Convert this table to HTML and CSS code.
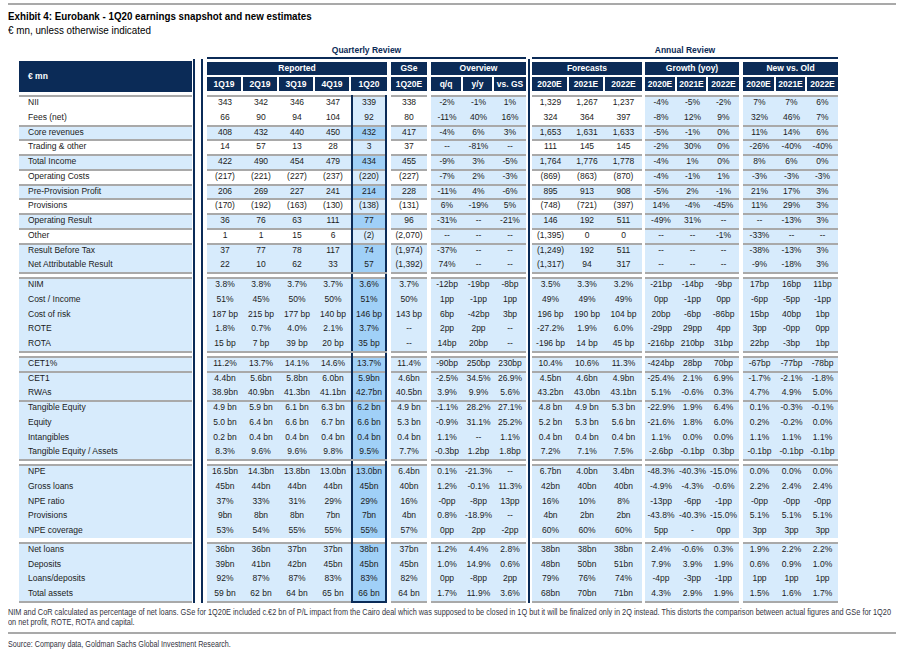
FILE: index.html
```html
<!DOCTYPE html>
<html lang="en">
<head>
<meta charset="utf-8">
<title>Exhibit 4: Eurobank - 1Q20 earnings snapshot and new estimates</title>
<link rel="stylesheet" href="styles.css">
</head>
<body>
<div class="page">
  <div class="rule"></div>
  <div class="title">Exhibit 4: Eurobank - 1Q20 earnings snapshot and new estimates</div>
  <div class="sub">€ mn, unless otherwise indicated</div>

  <div class="review">
    <div class="qr">Quarterly Review</div>
    <div class="ar">Annual Review</div>
  </div>

  <div class="tbl">
    <div class="hdr">
      <div class="hlab">€ mn</div>
      <div class="hg rep"><div class="gt">Reported</div><div class="gc"><span>1Q19</span><span>2Q19</span><span>3Q19</span><span>4Q19</span><span>1Q20</span></div></div>
      <div class="hg gse"><div class="gt">GSe</div><div class="gc"><span>1Q20E</span></div></div>
      <div class="hg ov"><div class="gt">Overview</div><div class="gc"><span>q/q</span><span>y/y</span><span>vs. GS</span></div></div>
      <div class="hg fc"><div class="gt">Forecasts</div><div class="gc"><span>2020E</span><span>2021E</span><span>2022E</span></div></div>
      <div class="hg gr"><div class="gt">Growth (yoy)</div><div class="gc"><span>2020E</span><span>2021E</span><span>2022E</span></div></div>
      <div class="hg nv"><div class="gt">New vs. Old</div><div class="gc"><span>2020E</span><span>2021E</span><span>2022E</span></div></div>
    </div>

    <div class="body">
      <div class="r t"><div class="lab">NII</div><div class="rep"><span>343</span><span>342</span><span>346</span><span>347</span><span>339</span></div><div class="gse"><span>338</span></div><div class="ov"><span>-2%</span><span>-1%</span><span>1%</span></div><div class="fc"><span>1,329</span><span>1,267</span><span>1,237</span></div><div class="gr"><span>-4%</span><span>-5%</span><span>-2%</span></div><div class="nv"><span>7%</span><span>7%</span><span>6%</span></div></div>
      <div class="r"><div class="lab">Fees (net)</div><div class="rep"><span>66</span><span>90</span><span>94</span><span>104</span><span>92</span></div><div class="gse"><span>80</span></div><div class="ov"><span>-11%</span><span>40%</span><span>16%</span></div><div class="fc"><span>324</span><span>364</span><span>397</span></div><div class="gr"><span>-8%</span><span>12%</span><span>9%</span></div><div class="nv"><span>32%</span><span>46%</span><span>7%</span></div></div>
      <div class="r t b"><div class="lab">Core revenues</div><div class="rep"><span>408</span><span>432</span><span>440</span><span>450</span><span>432</span></div><div class="gse"><span>417</span></div><div class="ov"><span>-4%</span><span>6%</span><span>3%</span></div><div class="fc"><span>1,653</span><span>1,631</span><span>1,633</span></div><div class="gr"><span>-5%</span><span>-1%</span><span>0%</span></div><div class="nv"><span>11%</span><span>14%</span><span>6%</span></div></div>
      <div class="r t"><div class="lab">Trading &amp; other</div><div class="rep"><span>14</span><span>57</span><span>13</span><span>28</span><span>3</span></div><div class="gse"><span>37</span></div><div class="ov"><span>--</span><span>-81%</span><span>--</span></div><div class="fc"><span>111</span><span>145</span><span>145</span></div><div class="gr"><span>-2%</span><span>30%</span><span>0%</span></div><div class="nv"><span>-26%</span><span>-40%</span><span>-40%</span></div></div>
      <div class="r t b"><div class="lab">Total Income</div><div class="rep"><span>422</span><span>490</span><span>454</span><span>479</span><span>434</span></div><div class="gse"><span>455</span></div><div class="ov"><span>-9%</span><span>3%</span><span>-5%</span></div><div class="fc"><span>1,764</span><span>1,776</span><span>1,778</span></div><div class="gr"><span>-4%</span><span>1%</span><span>0%</span></div><div class="nv"><span>8%</span><span>6%</span><span>0%</span></div></div>
      <div class="r t"><div class="lab">Operating Costs</div><div class="rep"><span>(217)</span><span>(221)</span><span>(227)</span><span>(237)</span><span>(220)</span></div><div class="gse"><span>(227)</span></div><div class="ov"><span>-7%</span><span>2%</span><span>-3%</span></div><div class="fc"><span>(869)</span><span>(863)</span><span>(870)</span></div><div class="gr"><span>-4%</span><span>-1%</span><span>1%</span></div><div class="nv"><span>-3%</span><span>-3%</span><span>-3%</span></div></div>
      <div class="r t b"><div class="lab">Pre-Provision Profit</div><div class="rep"><span>206</span><span>269</span><span>227</span><span>241</span><span>214</span></div><div class="gse"><span>228</span></div><div class="ov"><span>-11%</span><span>4%</span><span>-6%</span></div><div class="fc"><span>895</span><span>913</span><span>908</span></div><div class="gr"><span>-5%</span><span>2%</span><span>-1%</span></div><div class="nv"><span>21%</span><span>17%</span><span>3%</span></div></div>
      <div class="r t"><div class="lab">Provisions</div><div class="rep"><span>(170)</span><span>(192)</span><span>(163)</span><span>(130)</span><span>(138)</span></div><div class="gse"><span>(131)</span></div><div class="ov"><span>6%</span><span>-19%</span><span>5%</span></div><div class="fc"><span>(748)</span><span>(721)</span><span>(397)</span></div><div class="gr"><span>14%</span><span>-4%</span><span>-45%</span></div><div class="nv"><span>11%</span><span>29%</span><span>3%</span></div></div>
      <div class="r t b"><div class="lab">Operating Result</div><div class="rep"><span>36</span><span>76</span><span>63</span><span>111</span><span>77</span></div><div class="gse"><span>96</span></div><div class="ov"><span>-31%</span><span>--</span><span>-21%</span></div><div class="fc"><span>146</span><span>192</span><span>511</span></div><div class="gr"><span>-49%</span><span>31%</span><span>--</span></div><div class="nv"><span>--</span><span>-13%</span><span>3%</span></div></div>
      <div class="r t"><div class="lab">Other</div><div class="rep"><span>1</span><span>1</span><span>15</span><span>6</span><span>(2)</span></div><div class="gse"><span>(2,070)</span></div><div class="ov"><span>--</span><span>--</span><span>--</span></div><div class="fc"><span>(1,395)</span><span>0</span><span>0</span></div><div class="gr"><span>--</span><span>--</span><span>-1%</span></div><div class="nv"><span>-33%</span><span>--</span><span>--</span></div></div>
      <div class="r t b"><div class="lab">Result Before Tax</div><div class="rep"><span>37</span><span>77</span><span>78</span><span>117</span><span>74</span></div><div class="gse"><span>(1,974)</span></div><div class="ov"><span>-37%</span><span>--</span><span>--</span></div><div class="fc"><span>(1,249)</span><span>192</span><span>511</span></div><div class="gr"><span>--</span><span>--</span><span>--</span></div><div class="nv"><span>-38%</span><span>-13%</span><span>3%</span></div></div>
      <div class="r b"><div class="lab">Net Attributable Result</div><div class="rep"><span>22</span><span>10</span><span>62</span><span>33</span><span>57</span></div><div class="gse"><span>(1,392)</span></div><div class="ov"><span>74%</span><span>--</span><span>--</span></div><div class="fc"><span>(1,317)</span><span>94</span><span>317</span></div><div class="gr"><span>--</span><span>--</span><span>--</span></div><div class="nv"><span>-9%</span><span>-18%</span><span>3%</span></div></div>

      <div class="sep"><div class="lab"></div><div class="rep"></div><div class="gse"></div><div class="ov"></div><div class="fc"></div><div class="gr"></div><div class="nv"></div></div>

      <div class="r t b"><div class="lab">NIM</div><div class="rep"><span>3.8%</span><span>3.8%</span><span>3.7%</span><span>3.7%</span><span>3.6%</span></div><div class="gse"><span>3.7%</span></div><div class="ov"><span>-12bp</span><span>-19bp</span><span>-8bp</span></div><div class="fc"><span>3.5%</span><span>3.3%</span><span>3.2%</span></div><div class="gr"><span>-21bp</span><span>-14bp</span><span>-9bp</span></div><div class="nv"><span>17bp</span><span>16bp</span><span>11bp</span></div></div>
      <div class="r b"><div class="lab">Cost / Income</div><div class="rep"><span>51%</span><span>45%</span><span>50%</span><span>50%</span><span>51%</span></div><div class="gse"><span>50%</span></div><div class="ov"><span>1pp</span><span>-1pp</span><span>1pp</span></div><div class="fc"><span>49%</span><span>49%</span><span>49%</span></div><div class="gr"><span>0pp</span><span>-1pp</span><span>0pp</span></div><div class="nv"><span>-6pp</span><span>-5pp</span><span>-1pp</span></div></div>
      <div class="r b"><div class="lab">Cost of risk</div><div class="rep"><span>187 bp</span><span>215 bp</span><span>177 bp</span><span>140 bp</span><span>146 bp</span></div><div class="gse"><span>143 bp</span></div><div class="ov"><span>6bp</span><span>-42bp</span><span>3bp</span></div><div class="fc"><span>196 bp</span><span>190 bp</span><span>104 bp</span></div><div class="gr"><span>20bp</span><span>-6bp</span><span>-86bp</span></div><div class="nv"><span>15bp</span><span>40bp</span><span>1bp</span></div></div>
      <div class="r b"><div class="lab">ROTE</div><div class="rep"><span>1.8%</span><span>0.7%</span><span>4.0%</span><span>2.1%</span><span>3.7%</span></div><div class="gse"><span>--</span></div><div class="ov"><span>2pp</span><span>2pp</span><span>--</span></div><div class="fc"><span>-27.2%</span><span>1.9%</span><span>6.0%</span></div><div class="gr"><span>-29pp</span><span>29pp</span><span>4pp</span></div><div class="nv"><span>3pp</span><span>-0pp</span><span>0pp</span></div></div>
      <div class="r b"><div class="lab">ROTA</div><div class="rep"><span>15 bp</span><span>7 bp</span><span>39 bp</span><span>20 bp</span><span>35 bp</span></div><div class="gse"><span>--</span></div><div class="ov"><span>14bp</span><span>20bp</span><span>--</span></div><div class="fc"><span>-196 bp</span><span>14 bp</span><span>45 bp</span></div><div class="gr"><span>-216bp</span><span>210bp</span><span>31bp</span></div><div class="nv"><span>22bp</span><span>-3bp</span><span>1bp</span></div></div>

      <div class="sep"><div class="lab"></div><div class="rep"></div><div class="gse"></div><div class="ov"></div><div class="fc"></div><div class="gr"></div><div class="nv"></div></div>

      <div class="r t b"><div class="lab">CET1%</div><div class="rep"><span>11.2%</span><span>13.7%</span><span>14.1%</span><span>14.6%</span><span>13.7%</span></div><div class="gse"><span>11.4%</span></div><div class="ov"><span>-90bp</span><span>250bp</span><span>230bp</span></div><div class="fc"><span>10.4%</span><span>10.6%</span><span>11.3%</span></div><div class="gr"><span>-424bp</span><span>28bp</span><span>70bp</span></div><div class="nv"><span>-67bp</span><span>-77bp</span><span>-78bp</span></div></div>
      <div class="r t b"><div class="lab">CET1</div><div class="rep"><span>4.4bn</span><span>5.6bn</span><span>5.8bn</span><span>6.0bn</span><span>5.9bn</span></div><div class="gse"><span>4.6bn</span></div><div class="ov"><span>-2.5%</span><span>34.5%</span><span>26.9%</span></div><div class="fc"><span>4.5bn</span><span>4.6bn</span><span>4.9bn</span></div><div class="gr"><span>-25.4%</span><span>2.1%</span><span>6.9%</span></div><div class="nv"><span>-1.7%</span><span>-2.1%</span><span>-1.8%</span></div></div>
      <div class="r b"><div class="lab">RWAs</div><div class="rep"><span>38.9bn</span><span>40.9bn</span><span>41.3bn</span><span>41.1bn</span><span>42.7bn</span></div><div class="gse"><span>40.5bn</span></div><div class="ov"><span>3.9%</span><span>9.9%</span><span>5.6%</span></div><div class="fc"><span>43.2bn</span><span>43.0bn</span><span>43.1bn</span></div><div class="gr"><span>5.1%</span><span>-0.6%</span><span>0.3%</span></div><div class="nv"><span>4.7%</span><span>4.9%</span><span>5.0%</span></div></div>
      <div class="r t b"><div class="lab">Tangible Equity</div><div class="rep"><span>4.9 bn</span><span>5.9 bn</span><span>6.1 bn</span><span>6.3 bn</span><span>6.2 bn</span></div><div class="gse"><span>4.9 bn</span></div><div class="ov"><span>-1.1%</span><span>28.2%</span><span>27.1%</span></div><div class="fc"><span>4.8 bn</span><span>4.9 bn</span><span>5.3 bn</span></div><div class="gr"><span>-22.9%</span><span>1.9%</span><span>6.4%</span></div><div class="nv"><span>0.1%</span><span>-0.3%</span><span>-0.1%</span></div></div>
      <div class="r b"><div class="lab">Equity</div><div class="rep"><span>5.0 bn</span><span>6.4 bn</span><span>6.6 bn</span><span>6.7 bn</span><span>6.6 bn</span></div><div class="gse"><span>5.3 bn</span></div><div class="ov"><span>-0.9%</span><span>31.1%</span><span>25.2%</span></div><div class="fc"><span>5.2 bn</span><span>5.3 bn</span><span>5.6 bn</span></div><div class="gr"><span>-21.6%</span><span>1.8%</span><span>6.0%</span></div><div class="nv"><span>0.2%</span><span>-0.2%</span><span>0.0%</span></div></div>
      <div class="r b"><div class="lab">Intangibles</div><div class="rep"><span>0.2 bn</span><span>0.4 bn</span><span>0.4 bn</span><span>0.4 bn</span><span>0.4 bn</span></div><div class="gse"><span>0.4 bn</span></div><div class="ov"><span>1.1%</span><span>--</span><span>1.1%</span></div><div class="fc"><span>0.4 bn</span><span>0.4 bn</span><span>0.4 bn</span></div><div class="gr"><span>1.1%</span><span>0.0%</span><span>0.0%</span></div><div class="nv"><span>1.1%</span><span>1.1%</span><span>1.1%</span></div></div>
      <div class="r b"><div class="lab">Tangible Equity / Assets</div><div class="rep"><span>8.3%</span><span>9.6%</span><span>9.6%</span><span>9.8%</span><span>9.5%</span></div><div class="gse"><span>7.7%</span></div><div class="ov"><span>-0.3bp</span><span>1.2bp</span><span>1.8bp</span></div><div class="fc"><span>7.2%</span><span>7.1%</span><span>7.5%</span></div><div class="gr"><span>-2.6bp</span><span>-0.1bp</span><span>0.3bp</span></div><div class="nv"><span>-0.1bp</span><span>-0.1bp</span><span>-0.1bp</span></div></div>

      <div class="sep"><div class="lab"></div><div class="rep"></div><div class="gse"></div><div class="ov"></div><div class="fc"></div><div class="gr"></div><div class="nv"></div></div>

      <div class="r t b"><div class="lab">NPE</div><div class="rep"><span>16.5bn</span><span>14.3bn</span><span>13.8bn</span><span>13.0bn</span><span>13.0bn</span></div><div class="gse"><span>6.4bn</span></div><div class="ov"><span>0.1%</span><span>-21.3%</span><span>--</span></div><div class="fc"><span>6.7bn</span><span>4.0bn</span><span>3.4bn</span></div><div class="gr"><span>-48.3%</span><span>-40.3%</span><span>-15.0%</span></div><div class="nv"><span>0.0%</span><span>0.0%</span><span>0.0%</span></div></div>
      <div class="r b"><div class="lab">Gross loans</div><div class="rep"><span>45bn</span><span>44bn</span><span>44bn</span><span>44bn</span><span>45bn</span></div><div class="gse"><span>40bn</span></div><div class="ov"><span>1.2%</span><span>-0.1%</span><span>11.3%</span></div><div class="fc"><span>42bn</span><span>40bn</span><span>40bn</span></div><div class="gr"><span>-4.9%</span><span>-4.3%</span><span>-0.6%</span></div><div class="nv"><span>2.2%</span><span>2.4%</span><span>2.4%</span></div></div>
      <div class="r b"><div class="lab">NPE ratio</div><div class="rep"><span>37%</span><span>33%</span><span>31%</span><span>29%</span><span>29%</span></div><div class="gse"><span>16%</span></div><div class="ov"><span>-0pp</span><span>-8pp</span><span>13pp</span></div><div class="fc"><span>16%</span><span>10%</span><span>8%</span></div><div class="gr"><span>-13pp</span><span>-6pp</span><span>-1pp</span></div><div class="nv"><span>-0pp</span><span>-0pp</span><span>-0pp</span></div></div>
      <div class="r b"><div class="lab">Provisions</div><div class="rep"><span>9bn</span><span>8bn</span><span>8bn</span><span>7bn</span><span>7bn</span></div><div class="gse"><span>4bn</span></div><div class="ov"><span>0.8%</span><span>-18.9%</span><span>--</span></div><div class="fc"><span>4bn</span><span>2bn</span><span>2bn</span></div><div class="gr"><span>-43.8%</span><span>-40.3%</span><span>-15.0%</span></div><div class="nv"><span>5.1%</span><span>5.1%</span><span>5.1%</span></div></div>
      <div class="r b"><div class="lab">NPE coverage</div><div class="rep"><span>53%</span><span>54%</span><span>55%</span><span>55%</span><span>55%</span></div><div class="gse"><span>57%</span></div><div class="ov"><span>0pp</span><span>2pp</span><span>-2pp</span></div><div class="fc"><span>60%</span><span>60%</span><span>60%</span></div><div class="gr"><span>5pp</span><span>-</span><span>0pp</span></div><div class="nv"><span>3pp</span><span>3pp</span><span>3pp</span></div></div>

      <div class="sep gap"><div class="lab"></div><div class="rep"></div><div class="gse"></div><div class="ov"></div><div class="fc"></div><div class="gr"></div><div class="nv"></div></div>

      <div class="r t b"><div class="lab">Net loans</div><div class="rep"><span>36bn</span><span>36bn</span><span>37bn</span><span>37bn</span><span>38bn</span></div><div class="gse"><span>37bn</span></div><div class="ov"><span>1.2%</span><span>4.4%</span><span>2.8%</span></div><div class="fc"><span>38bn</span><span>38bn</span><span>38bn</span></div><div class="gr"><span>2.4%</span><span>-0.6%</span><span>0.3%</span></div><div class="nv"><span>1.9%</span><span>2.2%</span><span>2.2%</span></div></div>
      <div class="r b"><div class="lab">Deposits</div><div class="rep"><span>39bn</span><span>41bn</span><span>42bn</span><span>45bn</span><span>45bn</span></div><div class="gse"><span>45bn</span></div><div class="ov"><span>1.0%</span><span>14.9%</span><span>0.6%</span></div><div class="fc"><span>48bn</span><span>50bn</span><span>51bn</span></div><div class="gr"><span>7.9%</span><span>3.9%</span><span>1.9%</span></div><div class="nv"><span>0.6%</span><span>0.9%</span><span>1.0%</span></div></div>
      <div class="r b"><div class="lab">Loans/deposits</div><div class="rep"><span>92%</span><span>87%</span><span>87%</span><span>83%</span><span>83%</span></div><div class="gse"><span>82%</span></div><div class="ov"><span>0pp</span><span>-8pp</span><span>2pp</span></div><div class="fc"><span>79%</span><span>76%</span><span>74%</span></div><div class="gr"><span>-4pp</span><span>-3pp</span><span>-1pp</span></div><div class="nv"><span>1pp</span><span>1pp</span><span>1pp</span></div></div>
      <div class="r b"><div class="lab">Total assets</div><div class="rep"><span>59 bn</span><span>62 bn</span><span>64 bn</span><span>65 bn</span><span>66 bn</span></div><div class="gse"><span>64 bn</span></div><div class="ov"><span>1.7%</span><span>11.9%</span><span>3.6%</span></div><div class="fc"><span>68bn</span><span>70bn</span><span>71bn</span></div><div class="gr"><span>4.3%</span><span>2.9%</span><span>1.9%</span></div><div class="nv"><span>1.5%</span><span>1.6%</span><span>1.7%</span></div></div>

      <div class="end"><div class="lab"></div><div class="rep"></div><div class="gse"></div><div class="ov"></div><div class="fc"></div><div class="gr"></div><div class="nv"></div></div>
    </div>
  </div>

  <div class="note">NIM and CoR calculated as percentage of net loans. GSe for 1Q20E included c.€2 bn of P/L impact from the Cairo deal which was supposed to be closed in 1Q but it will be finalized only in 2Q instead. This distorts the comparison between actual figures and GSe for 1Q20<br>on net profit, ROTE, ROTA and capital.</div>
  <div class="rule2"></div>
  <div class="source">Source: Company data, Goldman Sachs Global Investment Research.</div>
</div>
</body>
</html>
```

FILE: styles.css
```css
* { box-sizing: border-box; }

body {
  margin: 0;
  background: #fff;
  color: #1b1b1b;
  font-family: "Liberation Sans", Arial, sans-serif;
}

.page {
  padding: 3px 4px 0 8px;
}

.rule {
  width: 888px;
  height: 2px;
  background: #a9a9a9;
}

/* narrow text: Arial-metric face, compressed horizontally like Arial Narrow */
.title, .sub, .note, .source {
  font-family: "Liberation Sans", Arial, sans-serif;
  white-space: nowrap;
  transform: scaleX(0.85);
  transform-origin: 0 50%;
}

.title {
  margin-top: 5px;
  font-weight: bold;
  font-size: 11.5px;
  line-height: 13px;
  color: #000;
}

.sub {
  font-size: 11.6px;
  line-height: 13px;
  color: #000;
}

/* review titles */
.review {
  display: flex;
  margin: 8px 0 0 11px;
  height: 15px;
  font-size: 8.5px;
  font-weight: bold;
  color: #0b2b57;
}
.review > div {
  text-align: center;
  line-height: 13px;
  border-bottom: 2px solid #0b2b57;
}
.qr { margin-left: 188px; width: 319px; }
.ar { margin-left: 6px; width: 306px; }

/* table */
.tbl {
  margin-left: 11px;
  width: 819px;
  padding-top: 2px;
  font-size: 8.5px;
  background:
    linear-gradient(#0b2b57, #0b2b57) 174px 0 / 2px 100% no-repeat,
    linear-gradient(#0b2b57, #0b2b57) 182px 0 / 2px 100% no-repeat,
    linear-gradient(#0b2b57, #0b2b57) 509px 0 / 2px 100% no-repeat,
    #fff;
}

.lab { width: 173px; margin-right: 15px; }
.rep { width: 180px; grid-template-columns: repeat(5, 36px); }
.gse { width: 36px; margin-left: 4px; grid-template-columns: 36px; }
.ov  { width: 95px; margin-left: 4px; grid-template-columns: 32px 31px 32px; }
.fc  { width: 110px; margin-left: 6px; grid-template-columns: 37px 36px 37px; }
.gr  { width: 94px; margin-left: 3px; grid-template-columns: 32px 31px 31px; }
.nv  { width: 95px; margin-left: 4px; grid-template-columns: 33px 31px 31px; }

/* header */
.hdr {
  display: flex;
  height: 31px;
  color: #fff;
  font-weight: bold;
}
.hlab {
  width: 173px;
  margin-right: 15px;
  background: #0b2b57;
  padding-left: 9px;
  line-height: 31px;
}
.hg {
  display: flex;
  flex-direction: column;
  gap: 2px;
  padding-top: 1px;
}
.gt {
  height: 13px;
  line-height: 13px;
  background: #0b2b57;
  text-align: center;
}
.gc {
  display: grid;
  grid-template-columns: inherit;
  height: 14px;
}
.gc span {
  background: #0b2b57;
  text-align: center;
  line-height: 14px;
  border-right: 2px solid #fff;
}
.gc span:last-child { border-right: 0; }

/* body */
.body { margin-top: 3px; }

.r {
  display: flex;
  height: 14.75px;
  line-height: 14.75px;
  color: #1b1b1b;
}
.r .lab {
  padding-left: 9px;
  white-space: nowrap;
}
.r .rep, .r .gse, .r .ov, .r .fc, .r .gr, .r .nv {
  display: grid;
}
.r span {
  text-align: center;
  white-space: nowrap;
}
.r .ov, .r .gr, .r .nv { background: #d7ebfc; }
.r.b .lab, .r.b .rep, .r.b .gse, .r.b .fc { background: #d7ebfc; }

.r .rep > span:last-child {
  border-left: 2px solid #0b2b57;
  border-right: 2px solid #0b2b57;
  background: #d7ebfc;
}
.r.b .rep > span:last-child { background: #a0d0f7; }

.r.t .lab, .r.t span { box-shadow: inset 0 2px 0 #a9a9a9; }

/* separators */
.sep, .end { display: flex; }
.sep > div {
  height: 5px;
  border-top: 2px solid #a9a9a9;
  background: #fff;
}
.sep.gap > div { height: 4px; border-top: 0; }
.sep .rep {
  background:
    linear-gradient(#0b2b57, #0b2b57) 144px 0 / 2px 100% no-repeat,
    linear-gradient(#0b2b57, #0b2b57) 178px 0 / 2px 100% no-repeat,
    #fff;
}
.end > div { height: 2px; background: #a9a9a9; }
.end .rep { background: linear-gradient(to right, #a9a9a9 144px, #0b2b57 144px); }

/* footer */
.note {
  margin-top: 4px;
  font-size: 8.67px;
  line-height: 10px;
  color: #333340;
}
.rule2 {
  margin-top: 5px;
  width: 888px;
  height: 2px;
  background: #a9a9a9;
}
.source {
  margin-top: 5px;
  font-size: 8.45px;
  line-height: 11px;
  color: #333340;
}
```
